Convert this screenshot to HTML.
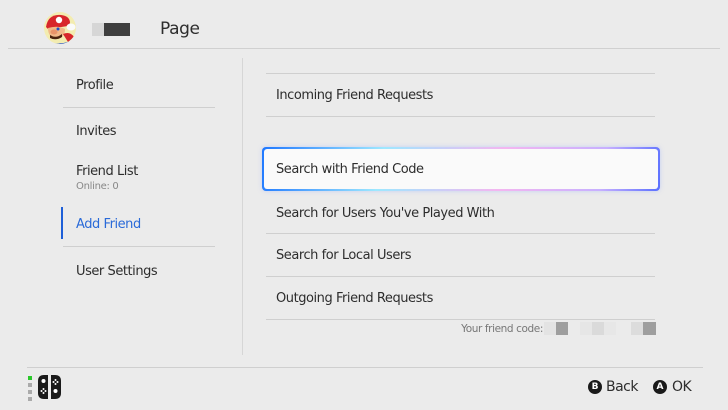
<!DOCTYPE html>
<html><head><meta charset="utf-8"><style>
*{margin:0;padding:0;box-sizing:border-box}
body{width:728px;height:410px;background:#ebebeb;font-family:"DejaVu Sans","Liberation Sans",sans-serif;color:#2d2d2d;position:relative;overflow:hidden}
.a{position:absolute}
.t{font-size:13px;letter-spacing:-0.45px}
.hl{height:1px;background:#cfcfcf}
</style></head><body>
<svg class="a" style="left:44px;top:12px" width="32" height="32" viewBox="0 0 32 32">
<defs><clipPath id="c"><circle cx="16" cy="16" r="16"/></clipPath></defs>
<g clip-path="url(#c)">
<rect width="32" height="32" fill="#f3ecb0"/>
<path d="M2 15 Q4 2 17 3 Q26 4 26 11 L24 14 L4 17Z" fill="#d8262a"/>
<circle cx="15" cy="8" r="3.2" fill="#fff"/>
<path d="M4 16 Q4 26 13 27 Q21 26 21 17 Q14 13 4 16Z" fill="#f1b888"/>
<ellipse cx="10" cy="20" rx="3.5" ry="2.5" fill="#e8946a"/>
<circle cx="14" cy="17" r="1.5" fill="#2050c8"/>
<path d="M6 23 Q12 27 18 22 L18 25 Q12 29 6 26Z" fill="#4a2410"/>
<path d="M0 28 Q16 36 32 26 L32 32 L0 32Z" fill="#2050c8"/>
<path d="M19 22 Q26 19 30 25 L24 30Z" fill="#d8262a"/>
<ellipse cx="27" cy="15" rx="4.5" ry="3.5" fill="#fafafa"/>
</g></svg>
<div class="a" style="left:92px;top:23px;width:12px;height:13px;background:#d6d6d6"></div>
<div class="a" style="left:104px;top:23px;width:26px;height:13px;background:#3e3e3e"></div>
<div class="a" style="left:160px;top:19px;font-size:17px;letter-spacing:-0.4px">Page</div>
<div class="a hl" style="left:8px;top:48px;width:712px;background:#d0d0d0"></div>

<div class="a t" style="left:76px;top:78px">Profile</div>
<div class="a hl" style="left:63px;top:107px;width:152px"></div>
<div class="a t" style="left:76px;top:124px">Invites</div>
<div class="a t" style="left:76px;top:164px">Friend List</div>
<div class="a" style="left:76px;top:181px;font-size:10px;color:#888;letter-spacing:-0.3px">Online: 0</div>
<div class="a" style="left:61px;top:207px;width:2px;height:32px;background:#1e5fd8"></div>
<div class="a t" style="left:76px;top:217px;color:#2a6ad8">Add Friend</div>
<div class="a hl" style="left:63px;top:246px;width:152px"></div>
<div class="a t" style="left:76px;top:264px">User Settings</div>
<div class="a" style="left:242px;top:58px;width:1px;height:297px;background:#d6d6d6"></div>

<div class="a hl" style="left:266px;top:73px;width:389px"></div>
<div class="a t" style="left:276px;top:88px">Incoming Friend Requests</div>
<div class="a hl" style="left:266px;top:116px;width:389px"></div>
<div class="a" style="left:262px;top:147px;width:398px;height:44px;border-radius:4px;padding:2px;background:linear-gradient(100deg,#1f78ff 0%,#9ee8ff 30%,#f4b6f0 60%,#c8b0ff 85%,#5a70ff 100%);box-shadow:0 0 4px rgba(160,180,255,.5)">
<div style="width:100%;height:100%;background:#fafafa;border-radius:3px"></div></div>
<div class="a t" style="left:276px;top:162px">Search with Friend Code</div>
<div class="a t" style="left:276px;top:206px">Search for Users You've Played With</div>
<div class="a hl" style="left:266px;top:233px;width:389px"></div>
<div class="a t" style="left:276px;top:248px">Search for Local Users</div>
<div class="a hl" style="left:266px;top:276px;width:389px"></div>
<div class="a t" style="left:276px;top:291px">Outgoing Friend Requests</div>
<div class="a hl" style="left:266px;top:319px;width:389px"></div>
<div class="a" style="left:420px;width:123px;text-align:right;top:323px;font-size:10.5px;color:#777;letter-spacing:-0.4px">Your friend code:</div>
<div class="a" style="left:544px;top:322px;width:12px;height:13px;background:#e3e3e3"></div>
<div class="a" style="left:556px;top:322px;width:12px;height:13px;background:#9e9e9e"></div>
<div class="a" style="left:580px;top:322px;width:12px;height:13px;background:#e6e6e6"></div>
<div class="a" style="left:592px;top:322px;width:12px;height:13px;background:#dadada"></div>
<div class="a" style="left:604px;top:322px;width:12px;height:13px;background:#e7e7e7"></div>
<div class="a" style="left:631px;top:322px;width:12px;height:13px;background:#dcdcdc"></div>
<div class="a" style="left:643px;top:322px;width:13px;height:13px;background:#9e9e9e"></div>

<div class="a hl" style="left:27px;top:367px;width:676px;background:#cfcfcf"></div>
<div class="a" style="left:28px;top:376px;width:4px;height:4px;background:#2bc82b"></div>
<div class="a" style="left:28px;top:383px;width:4px;height:4px;background:#aaa"></div>
<div class="a" style="left:28px;top:390px;width:4px;height:4px;background:#aaa"></div>
<div class="a" style="left:28px;top:397px;width:4px;height:4px;background:#aaa"></div>
<svg class="a" style="left:37px;top:375px" width="26" height="24" viewBox="0 0 26 24">
<path d="M11 0 H7 Q1 0 1 6 V18 Q1 24 7 24 H11Z" fill="#1a1a1a"/>
<path d="M14 0 H18 Q24 0 24 6 V18 Q24 24 18 24 H14Z" fill="#1a1a1a"/>
<circle cx="6.5" cy="6" r="2" fill="#fff"/>
<circle cx="6.5" cy="14" r="1" fill="#fff"/><circle cx="4.5" cy="16" r="1" fill="#fff"/><circle cx="8.5" cy="16" r="1" fill="#fff"/><circle cx="6.5" cy="18" r="1" fill="#fff"/>
<circle cx="18.5" cy="5" r="1" fill="#fff"/><circle cx="16.5" cy="7" r="1" fill="#fff"/><circle cx="20.5" cy="7" r="1" fill="#fff"/><circle cx="18.5" cy="9" r="1" fill="#fff"/>
<circle cx="18.5" cy="16" r="2" fill="#fff"/>
</svg>
<div class="a" style="left:588px;top:380px;width:14px;height:14px;border-radius:50%;background:#1a1a1a;color:#fff;font-size:9px;font-weight:bold;text-align:center;line-height:14px">B</div>
<div class="a" style="left:606px;top:379px;font-size:14px;letter-spacing:-0.5px">Back</div>
<div class="a" style="left:653px;top:380px;width:14px;height:14px;border-radius:50%;background:#1a1a1a;color:#fff;font-size:9px;font-weight:bold;text-align:center;line-height:14px">A</div>
<div class="a" style="left:672px;top:379px;font-size:14px;letter-spacing:-0.5px">OK</div>
</body></html>
